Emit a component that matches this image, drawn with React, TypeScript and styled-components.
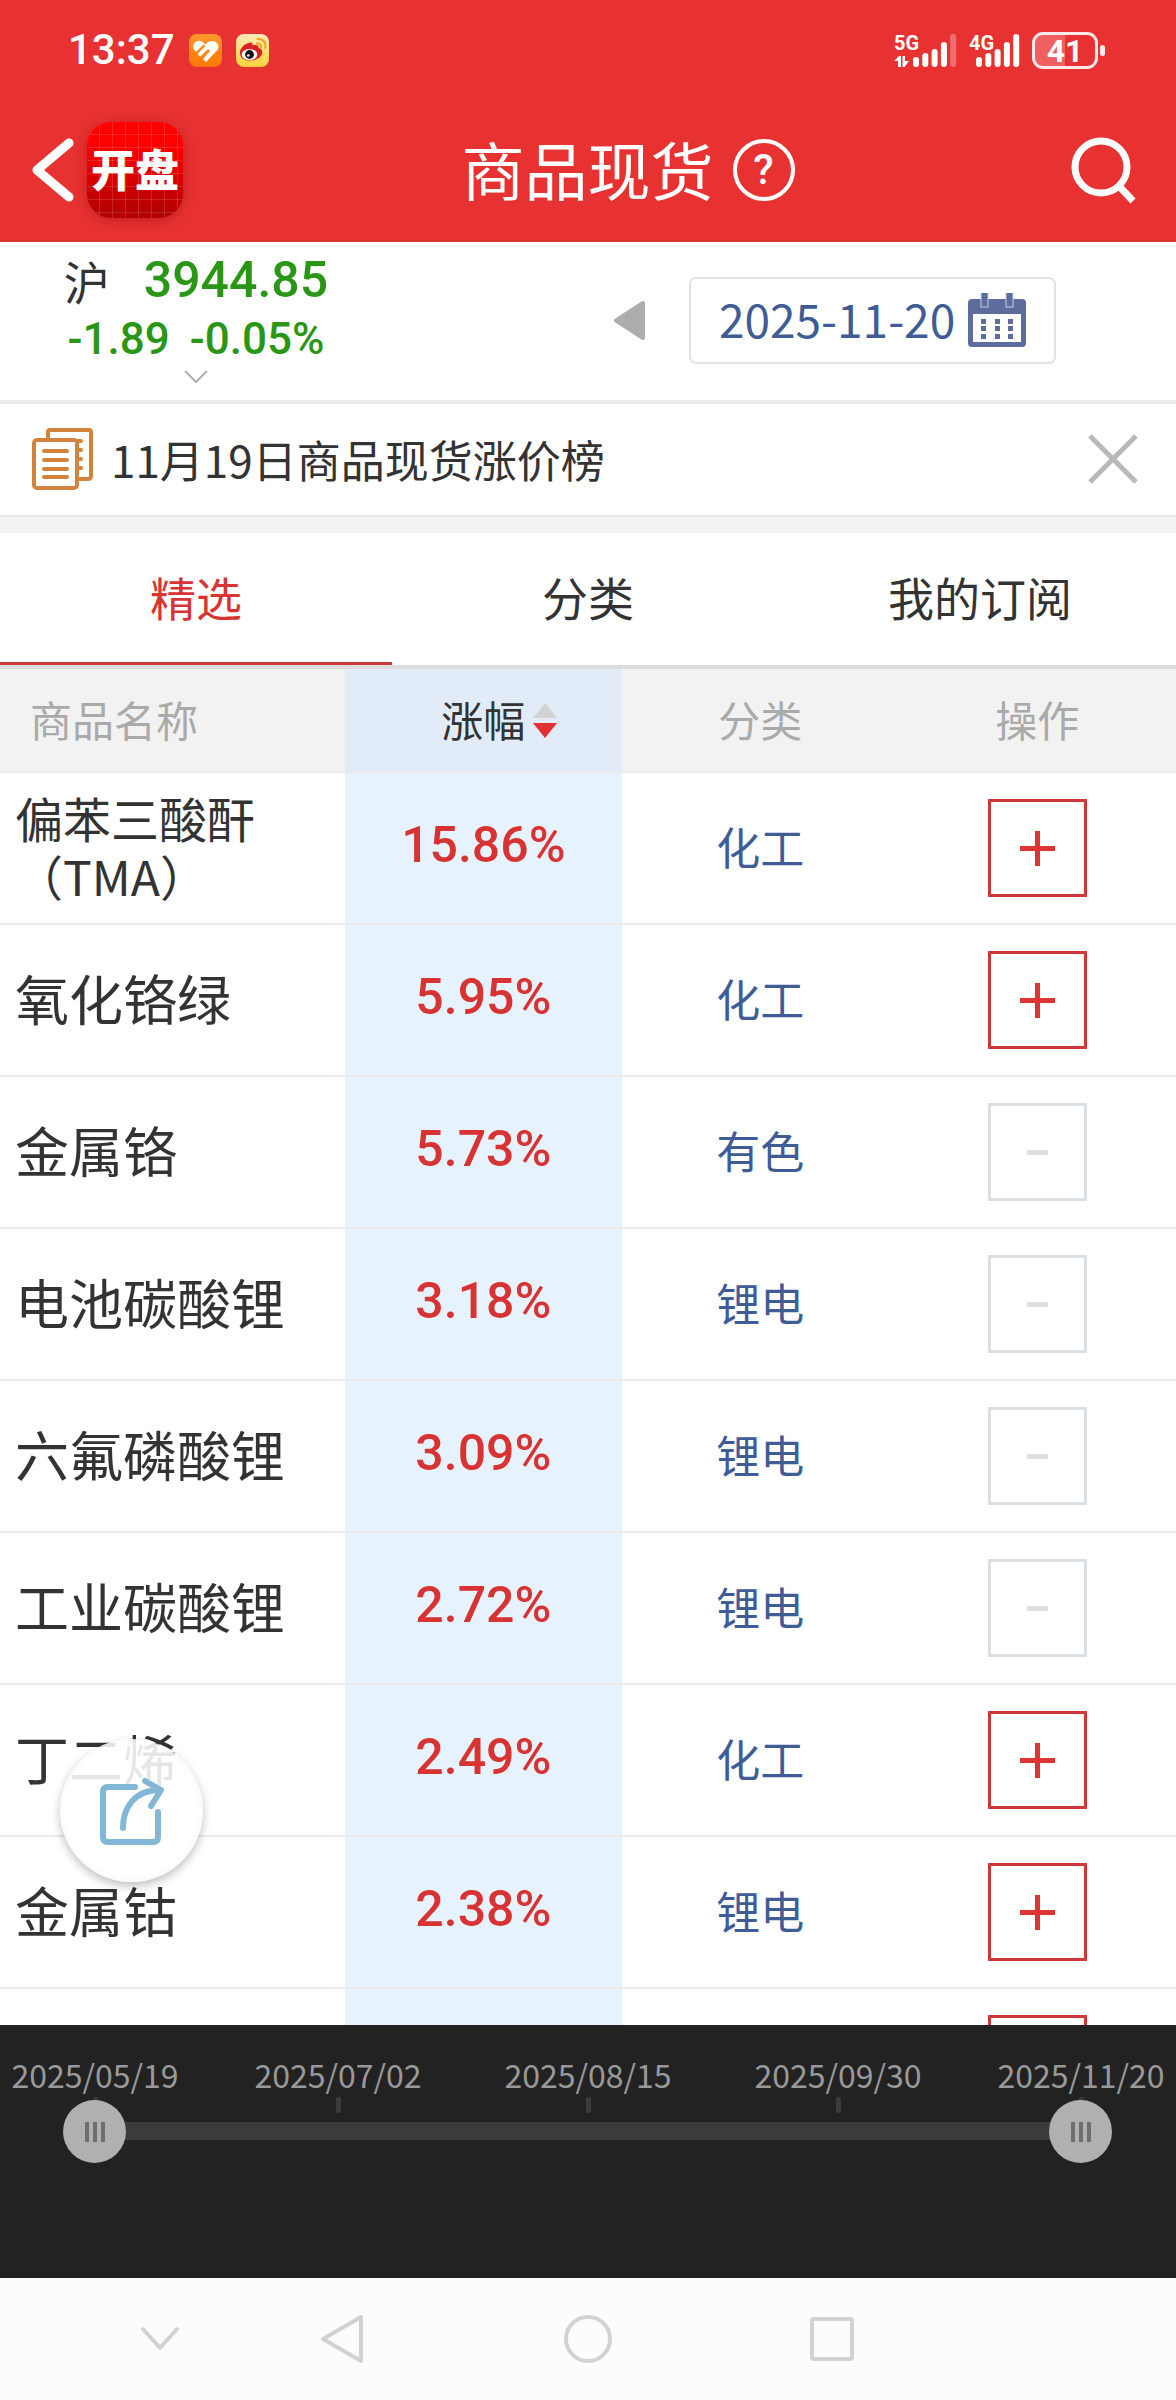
import React, { useState } from "react";
import styled, { createGlobalStyle } from "styled-components";

const sans = `"Noto Sans CJK SC", "Noto Sans", sans-serif`;
const numeric = `Roboto, "Noto Sans CJK SC", sans-serif`;

const GlobalStyle = createGlobalStyle`
  * { box-sizing: border-box; }
  body { margin: 0; background: #fff; color: #333; font-family: ${sans}; }
  button, input { font: inherit; color: inherit; margin: 0; }
  button { padding: 0; border: 0; background: none; cursor: pointer; }
  h1, h2, p { margin: 0; font-weight: 400; }
  svg { display: block; flex: none; }
`;

const Screen = styled.div`
  display: flex;
  flex-direction: column;
  height: 100vh;
  overflow: hidden;
`;

const TopArea = styled.header`
  flex: none;
  background: #e83131;
  color: #fff;
  border-bottom: 2px solid #dc3535;
`;

const StatusBar = styled.div`
  display: flex;
  justify-content: space-between;
  align-items: center;
  height: 100px;
  padding: 0 70px 0 68px;
`;

const StatusGroup = styled.div<{ $gap: number }>`
  display: flex;
  align-items: center;
  gap: ${(p) => p.$gap}px;
`;

const Clock = styled.time`
  font-size: 42px;
  line-height: 48px;
  font-weight: 500;
  font-family: ${numeric};
`;

const Battery = styled.div`
  position: relative;
  display: grid;
  place-items: center;
  width: 66px;
  height: 37px;
  margin-right: 8px;
  border: 3px solid #fde9e9;
  border-radius: 11px;
  background: linear-gradient(90deg, #f06060 50%, transparent 50%);
  font: 700 32px/32px ${numeric};

  &::after {
    content: "";
    position: absolute;
    right: -10px;
    top: 10px;
    width: 5px;
    height: 11px;
    border-radius: 3px;
    background: #fde9e9;
  }
`;

const TitleBar = styled.div`
  display: grid;
  grid-template-columns: 1fr auto 1fr;
  align-items: center;
  height: 140px;
  padding: 0 38px 0 30px;
`;

const TitleLeft = styled.div`
  display: flex;
  align-items: center;
  gap: 11px;
`;

const AppBadge = styled.span`
  display: grid;
  place-items: center;
  width: 96px;
  height: 96px;
  padding-bottom: 4px;
  border-radius: 24px;
  background:
    repeating-linear-gradient(90deg, transparent 0 12px, rgba(255, 255, 255, 0.14) 12px 13px),
    repeating-linear-gradient(180deg, transparent 0 12px, rgba(255, 255, 255, 0.14) 12px 13px),
    linear-gradient(180deg, #ff0000 20%, #b40000 95%);
  box-shadow: 0 2px 12px rgba(120, 0, 0, 0.35);
  font-size: 44px;
  line-height: 60px;
  font-weight: 900;
  white-space: nowrap;
`;

const PageTitle = styled.h1`
  padding-bottom: 4px;
  font-size: 63px;
  line-height: 80px;
`;

const TitleCenter = styled.div`
  display: flex;
  align-items: center;
  gap: 19px;
  padding-left: 88px;
`;

const HelpButton = styled.button`
  width: 62px;
  height: 62px;
  border: 4px solid #fff;
  border-radius: 50%;
  font: 500 42px/54px ${numeric};
  color: #fff;
`;

const IconButton = styled.button`
  display: block;
  justify-self: end;
`;

const QuoteBar = styled.section`
  flex: none;
  display: flex;
  height: 162px;
  border-bottom: 4px solid #ebebeb;
`;

const IndexQuote = styled.button`
  display: flex;
  flex-direction: column;
  align-items: center;
  width: 33.33%;
  padding-top: 10px;
`;

const IndexLine = styled.span<{ $small?: boolean }>`
  display: flex;
  align-items: center;
  gap: ${(p) => (p.$small ? 20 : 34)}px;
  height: ${(p) => (p.$small ? 62 : 56)}px;
  font: 500 ${(p) => (p.$small ? 44 : 50)}px/56px ${numeric};
  color: #2a9615;
`;

const IndexName = styled.span`
  font: 400 46px/56px ${sans};
  color: #333;
`;

const DatePicker = styled.div`
  flex: 1;
  display: flex;
  align-items: center;
  justify-content: flex-end;
  gap: 43px;
  padding: 0 120px 2px 0;
`;

const DateButton = styled.button`
  display: flex;
  align-items: center;
  justify-content: space-between;
  width: 367px;
  height: 87px;
  padding: 0 28px;
  border: 2px solid #e3e3e3;
  border-radius: 7px;
  font-size: 46px;
  line-height: 56px;
  color: #3f5c97;
`;

const DateText = styled.span`
  padding-bottom: 4px;
`;

const Notice = styled.section`
  flex: none;
  display: flex;
  align-items: center;
  height: 113px;
  padding: 0 38px 2px 32px;
  border-bottom: 2px solid #e9e9e9;
`;

const NoticeText = styled.a`
  flex: 1;
  margin-left: 17px;
  font-size: 44px;
  line-height: 60px;
  color: #333;
  text-decoration: none;
`;

const Tabs = styled.nav`
  flex: none;
  display: flex;
  border-top: 16px solid #f2f2f2;
  border-bottom: 4px solid #dcdcdc;
`;

const Tab = styled.button<{ $active: boolean }>`
  flex: 1;
  height: 132px;
  padding-bottom: 4px;
  border-bottom: 3px solid ${(p) => (p.$active ? "#c93a3c" : "transparent")};
  font-size: 46px;
  line-height: 60px;
  color: ${(p) => (p.$active ? "#d93434" : "#333")};
`;

const TableArea = styled.main`
  flex: 1;
  min-height: 0;
  overflow: hidden;
  position: relative;
`;

const Table = styled.table`
  width: 100%;
  table-layout: fixed;
  border-collapse: separate;
  border-spacing: 0;
`;

const Col = styled.col<{ $w: string }>`
  width: ${(p) => p.$w};
`;

const Th = styled.th<{ $sorted?: boolean; $left?: boolean }>`
  height: 104px;
  padding: 0 ${(p) => (p.$left ? 30 : 0)}px 2px;
  border-bottom: 2px solid #e9ebec;
  background: ${(p) => (p.$sorted ? "#e1ecf8" : "#f2f2f2")};
  font-size: 42px;
  line-height: 60px;
  font-weight: 400;
  text-align: ${(p) => (p.$left ? "left" : "center")};
  color: #aaa;
`;

const SortButton = styled.button`
  position: relative;
  color: #333;

  svg {
    position: absolute;
    left: 100%;
    top: 14px;
    margin-left: 8px;
  }
`;

const Td = styled.td<{ $shaded?: boolean }>`
  height: 152px;
  padding: 0;
  border-bottom: 2px solid #e9ebec;
  background: ${(p) => (p.$shaded ? "#e6f3ff" : "#fff")};
  text-align: center;
  vertical-align: middle;
`;

const NameCell = styled(Td)<{ $long: boolean }>`
  padding: 0 14px 4px 15px;
  text-align: left;
  font-size: ${(p) => (p.$long ? 48 : 54)}px;
  line-height: 58px;
  white-space: pre-line;
`;

const Change = styled.span`
  display: block;
  padding-bottom: 6px;
  font: 500 50px/60px ${numeric};
  color: #d93232;
`;

const Category = styled.a`
  display: block;
  padding-bottom: 4px;
  font-size: 44px;
  line-height: 60px;
  color: #3f5c97;
  text-decoration: none;
`;

const SubscribeButton = styled.button<{ $added: boolean }>`
  display: inline-grid;
  place-items: center;
  width: 99px;
  height: 98px;
  border: 3px solid currentColor;
  vertical-align: middle;
  color: ${(p) => (p.$added ? "#dadfe4" : "#ce3739")};
`;

const ShareButton = styled.button`
  position: absolute;
  left: 60px;
  bottom: 143px;
  display: grid;
  place-items: center;
  width: 143px;
  height: 143px;
  border-radius: 50%;
  background: rgba(255, 255, 255, 0.88);
  box-shadow: 0 4px 10px rgba(0, 0, 0, 0.25), inset 0 0 10px rgba(0, 0, 0, 0.04);
`;

const Timeline = styled.section`
  flex: none;
  height: 253px;
  padding-top: 29px;
  background: #222;
`;

const Scale = styled.ol`
  display: grid;
  grid-template-columns: 190fr 296fr 204fr 296fr 190fr;
  margin: 0;
  padding: 0;
  list-style: none;
`;

const ScaleMark = styled.li`
  display: flex;
  flex-direction: column;
  align-items: center;
  font-size: 32px;
  line-height: 40px;
  color: #999;

  &::after {
    content: "";
    width: 5px;
    height: 16px;
    margin-top: 3px;
    border-radius: 2px;
    background: #3b3b3b;
  }
`;

const Range = styled.div`
  position: relative;
  height: 18px;
  margin: 9px 96px 0 95px;
  background: #3b3b3b;
`;

const RangeInput = styled.input`
  position: absolute;
  left: -32px;
  top: -23px;
  width: calc(100% + 64px);
  height: 64px;
  appearance: none;
  background: none;
  pointer-events: none;

  &::-webkit-slider-thumb {
    appearance: none;
    width: 63px;
    height: 63px;
    border-radius: 50%;
    pointer-events: auto;
    background:
      linear-gradient(#6f6f6f, #6f6f6f) 22px 22px / 4px 20px no-repeat,
      linear-gradient(#6f6f6f, #6f6f6f) 30px 22px / 4px 20px no-repeat,
      linear-gradient(#6f6f6f, #6f6f6f) 38px 22px / 4px 20px no-repeat,
      #b0b0b0;
  }
`;

const SystemNav = styled.nav`
  flex: none;
  display: grid;
  grid-template-columns: 1fr auto 1fr;
  align-items: center;
  height: 122px;
  background: #fcfcfc;
`;

const NavSide = styled.div<{ $end?: boolean }>`
  display: flex;
  justify-content: ${(p) => (p.$end ? "flex-end" : "flex-start")};
  gap: 134px;
  padding: ${(p) => (p.$end ? "0 198px 0 0" : "0 0 0 196px")};
`;

const NavIcon = ({ children }: { children: React.ReactNode }) => (
  <svg width="48" height="50" viewBox="0 0 48 50" fill="none" stroke="#d2d2d2" strokeWidth="4" strokeLinecap="round" strokeLinejoin="round">
    {children}
  </svg>
);

const WalletIcon = () => (
  <svg width="33" height="33" viewBox="0 0 33 33">
    <defs>
      <linearGradient id="wallet" x1="0" y1="0" x2="0" y2="1">
        <stop offset="0" stopColor="#ff9a2e" />
        <stop offset="1" stopColor="#ff7600" />
      </linearGradient>
    </defs>
    <rect width="33" height="33" rx="8" fill="url(#wallet)" />
    <path d="M17 28 L14 25 L21 17 L19 15 L11.500 22.500 L8.500 20 L16.500 12 L14.500 10.500 L7 18 L5 15.500 C2 10.500 8 4 13.500 8 L16.500 10.500 C21 4.500 29.500 7 29.500 13.500 C29 15.500 27.500 17 26 18.500 Z" fill="#fff" />
  </svg>
);

const WeiboIcon = () => (
  <svg width="33" height="33" viewBox="0 0 33 33">
    <defs>
      <linearGradient id="weibo" x1="0" y1="0" x2="0" y2="1">
        <stop offset="0" stopColor="#ffe9b8" />
        <stop offset="1" stopColor="#ffd23c" />
      </linearGradient>
    </defs>
    <rect width="33" height="33" rx="8" fill="url(#weibo)" />
    <path d="M4 20 C3 15 9 9 13.500 9 C15 8 17 9 16.500 11.500 C20 10.500 23 11 22.500 14 C27 15 27.500 19.500 24 23 C19 28 5 28.500 4 20 Z" fill="#dc1f1f" />
    <ellipse cx="13.500" cy="20.500" rx="7.800" ry="5.600" fill="#fff" />
    <circle cx="13.500" cy="20.500" r="4.400" fill="#111" />
    <circle cx="12.300" cy="21.500" r="1.300" fill="#fff" />
    <path d="M21 9.500 C24 9 25.500 11 25 13.500 M21.500 5 C27.500 4.500 30.500 9 29 14" fill="none" stroke="#e8a81c" strokeWidth="2" strokeLinecap="round" />
  </svg>
);

const barTops = [24, 20, 16, 9, 1];

const Signal = ({ label, start, dimLast, arrows }: { label: string; start: number; dimLast?: boolean; arrows?: boolean }) => (
  <svg width={start + 44} height="47" viewBox={`0 -6 ${start + 44} 47`} fill="#fff">
    <text x="0" y="17" fontFamily="Roboto, sans-serif" fontWeight="700" fontSize="20">{label}</text>
    {barTops.map((top, i) => (
      <rect key={top} x={start + i * 9.3} y={top} width="6" height={34 - top} rx="3" opacity={dimLast && i === 4 ? 0.3 : 1} />
    ))}
    {arrows && <path d="M0 28 L5 23 L7 23 L7 34 L4 34 L4 28 Z M8.500 23 L11 23 L11 28 L15 28 L10.500 34 L8.500 34 Z" />}
  </svg>
);

const NewsIcon = () => (
  <svg width="62" height="62" viewBox="0 0 62 62" fill="none" stroke="#d5833c" strokeWidth="4" strokeLinecap="round" strokeLinejoin="round">
    <path d="M16 9 V4 Q16 2 18 2 H57 Q59 2 59 4 V48 Q59 51 56 51 H48" />
    <rect x="2" y="12" width="43" height="48" rx="3" />
    <path d="M12 23 H35 M12 32 H35 M12 41 H35 M12 49 H35 M46 13 H49 M46 22 H49 M46 31 H49 M46 40 H49" />
  </svg>
);

const CalendarIcon = () => (
  <svg width="58" height="54" viewBox="0 0 58 54" fill="#5b6c9d">
    <path d="M4 6 H54 Q58 6 58 10 V50 Q58 54 54 54 H4 Q0 54 0 50 V10 Q0 6 4 6 Z M5 21 V49 H53 V21 Z" fillRule="evenodd" />
    <rect x="13" y="-1" width="7" height="15" stroke="#c9cfe2" strokeWidth="1" />
    <rect x="38" y="-1" width="7" height="15" stroke="#c9cfe2" strokeWidth="1" />
    {[13, 27, 40].map((x) => [26, 33, 41].map((y) => <rect key={`${x}-${y}`} x={x} y={y} width="5" height="5" />))}
  </svg>
);

const ShareIcon = () => (
  <svg width="66" height="68" viewBox="0 0 66 68" fill="none" stroke="#82b7d5" strokeWidth="6" strokeLinecap="round" strokeLinejoin="round">
    <path d="M36 10 H9 Q4 10 4 15 V60 Q4 65 9 65 H54 Q59 65 59 60 V35" />
    <path d="M24 51 C24 30 36 13 61 13" />
    <path d="M46 4 L62 13 L52 29" />
  </svg>
);

type Item = { name: string; change: string; category: string; added: boolean };

const initialItems: Item[] = [
  { name: "偏苯三酸酐\n（TMA）", change: "15.86%", category: "化工", added: false },
  { name: "氧化铬绿", change: "5.95%", category: "化工", added: false },
  { name: "金属铬", change: "5.73%", category: "有色", added: true },
  { name: "电池碳酸锂", change: "3.18%", category: "锂电", added: true },
  { name: "六氟磷酸锂", change: "3.09%", category: "锂电", added: true },
  { name: "工业碳酸锂", change: "2.72%", category: "锂电", added: true },
  { name: "丁二烯", change: "2.49%", category: "化工", added: false },
  { name: "金属钴", change: "2.38%", category: "锂电", added: false },
  { name: "", change: "", category: "", added: false },
];

const tabs = ["精选", "分类", "我的订阅"];
const marks = ["2025/05/19", "2025/07/02", "2025/08/15", "2025/09/30", "2025/11/20"];

export default function App() {
  const [active, setActive] = useState(0);
  const [items, setItems] = useState(initialItems);

  const toggle = (index: number) =>
    setItems(items.map((item, i) => (i === index ? { ...item, added: !item.added } : item)));

  return (
    <Screen>
      <GlobalStyle />
      <TopArea>
        <StatusBar>
          <StatusGroup $gap={14}>
            <Clock>13:37</Clock>
            <WalletIcon />
            <WeiboIcon />
          </StatusGroup>
          <StatusGroup $gap={12}>
            <Signal label="5G" start={19} dimLast arrows />
            <Signal label="4G" start={7} />
            <Battery>41</Battery>
          </StatusGroup>
        </StatusBar>
        <TitleBar>
          <TitleLeft>
            <button type="button" aria-label="返回">
              <svg width="46" height="66" viewBox="0 0 46 66" fill="none" stroke="#fff" strokeWidth="9" strokeLinecap="round" strokeLinejoin="round">
                <path d="M39 6 L7 33 L39 60" />
              </svg>
            </button>
            <AppBadge>开盘</AppBadge>
          </TitleLeft>
          <TitleCenter>
            <PageTitle>商品现货</PageTitle>
            <HelpButton type="button">?</HelpButton>
          </TitleCenter>
          <IconButton type="button" aria-label="搜索">
            <svg width="68" height="68" viewBox="0 0 68 68" fill="none" stroke="#fff" strokeWidth="7">
              <circle cx="31" cy="31" r="26" />
              <path d="M49 50 L63 65" />
            </svg>
          </IconButton>
        </TitleBar>
      </TopArea>

      <QuoteBar>
        <IndexQuote type="button">
          <IndexLine>
            <IndexName>沪</IndexName>
            <span>3944.85</span>
          </IndexLine>
          <IndexLine $small>
            <span>-1.89</span>
            <span>-0.05%</span>
          </IndexLine>
          <svg width="24" height="14" viewBox="0 0 24 14" fill="none" stroke="#b0b0b0" strokeWidth="2">
            <path d="M1 1 L12 12 L23 1" />
          </svg>
        </IndexQuote>
        <DatePicker>
          <button type="button" aria-label="前一天">
            <svg width="32" height="41" viewBox="0 0 32 41" fill="#adadad" stroke="#adadad" strokeWidth="4" strokeLinejoin="round">
              <path d="M2 20.500 L29 3 V38 Z" />
            </svg>
          </button>
          <DateButton type="button">
            <DateText>2025-11-20</DateText>
            <CalendarIcon />
          </DateButton>
        </DatePicker>
      </QuoteBar>

      <Notice>
        <NewsIcon />
        <NoticeText href="#rank">11月19日商品现货涨价榜</NoticeText>
        <button type="button" aria-label="关闭">
          <svg width="50" height="50" viewBox="0 0 50 50" stroke="#b9b9b9" strokeWidth="5">
            <path d="M2 2 L48 48 M48 2 L2 48" />
          </svg>
        </button>
      </Notice>

      <Tabs>
        {tabs.map((tab, i) => (
          <Tab key={tab} type="button" $active={i === active} onClick={() => setActive(i)}>
            {tab}
          </Tab>
        ))}
      </Tabs>

      <TableArea>
        <Table>
          <colgroup>
            <Col $w="29.3%" />
            <Col $w="23.6%" />
            <Col $w="23.5%" />
            <Col $w="23.6%" />
          </colgroup>
          <thead>
            <tr>
              <Th $left>商品名称</Th>
              <Th $sorted>
                <SortButton type="button">
                  涨幅
                  <svg width="24" height="36" viewBox="0 0 24 36">
                    <path d="M12 0 L24 15 H0 Z" fill="#d2d2d2" />
                    <path d="M0 20 H24 L12 35 Z" fill="#e33030" />
                  </svg>
                </SortButton>
              </Th>
              <Th>分类</Th>
              <Th>操作</Th>
            </tr>
          </thead>
          <tbody>
            {items.map((item, i) => (
              <tr key={i}>
                <NameCell $long={item.name.includes("\n")}>{item.name}</NameCell>
                <Td $shaded>
                  <Change>{item.change}</Change>
                </Td>
                <Td>{item.category && <Category href="#category">{item.category}</Category>}</Td>
                <Td>
                  <SubscribeButton
                    type="button"
                    $added={item.added}
                    aria-label={item.added ? "取消订阅" : "订阅"}
                    onClick={() => toggle(i)}
                  >
                    <svg width="35" height="35" viewBox="0 0 35 35" strokeWidth="5" stroke={item.added ? "#dadfe4" : "#de3434"}>
                      <path d={item.added ? "M7 17.500 H28" : "M0 17.500 H35 M17.500 0 V35"} />
                    </svg>
                  </SubscribeButton>
                </Td>
              </tr>
            ))}
          </tbody>
        </Table>
        <ShareButton type="button" aria-label="分享">
          <ShareIcon />
        </ShareButton>
      </TableArea>

      <Timeline>
        <Scale>
          {marks.map((mark) => (
            <ScaleMark key={mark}>{mark}</ScaleMark>
          ))}
        </Scale>
        <Range>
          <RangeInput type="range" aria-label="开始日期" min={0} max={185} defaultValue={0} />
          <RangeInput type="range" aria-label="结束日期" min={0} max={185} defaultValue={185} />
        </Range>
      </Timeline>

      <SystemNav>
        <NavSide $end>
          <button type="button" aria-label="收起">
            <NavIcon><path d="M7 15 L24 34 L41 15" /></NavIcon>
          </button>
          <button type="button" aria-label="系统返回">
            <NavIcon><path d="M5 25 L43 3 V47 Z" /></NavIcon>
          </button>
        </NavSide>
        <button type="button" aria-label="主屏幕">
          <NavIcon><circle cx="24" cy="25" r="22" /></NavIcon>
        </button>
        <NavSide>
          <button type="button" aria-label="最近任务">
            <NavIcon><rect x="4" y="5" width="40" height="40" rx="2" /></NavIcon>
          </button>
        </NavSide>
      </SystemNav>
    </Screen>
  );
}
